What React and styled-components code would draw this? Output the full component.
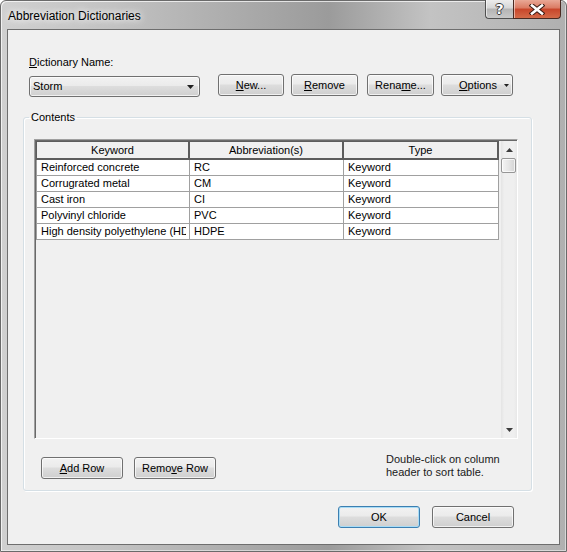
import React from "react";
import styled, { createGlobalStyle } from "styled-components";

const GlobalStyle = createGlobalStyle`
  html, body {
    margin: 0;
    padding: 0;
    background: #ffffff;
  }
  body {
    font-family: "Liberation Sans", Arial, sans-serif;
    font-size: 11px;
    color: #000;
  }
`;

const rows = [
  ["Reinforced concrete", "RC", "Keyword"],
  ["Corrugrated metal", "CM", "Keyword"],
  ["Cast iron", "CI", "Keyword"],
  ["Polyvinyl chloride", "PVC", "Keyword"],
  ["High density polyethylene (HDPE)", "HDPE", "Keyword"],
];

const colWidths = [153, 154, 155];

function Triangle({ w = 7, h = 4, up = false, color = "#202020" }) {
  const pts = up ? `0,${h} ${w},${h} ${w / 2},0` : `0,0 ${w},0 ${w / 2},${h}`;
  return (
    <svg width={w} height={h} viewBox={`0 0 ${w} ${h}`} style={{ display: "block" }}>
      <polygon points={pts} fill={color} />
    </svg>
  );
}

function App() {
  return (
    <>
      <GlobalStyle />
      <Window>
        <TitleBar>
          <Title>Abbreviation Dictionaries</Title>
          <CaptionGroup>
            <HelpButton>?</HelpButton>
            <CloseButton>
              <svg width="16" height="11" viewBox="0 0 16 11">
                <path d="M3 1.5 L13 9.5 M13 1.5 L3 9.5" stroke="#3a1a12" strokeWidth="4.6" strokeLinecap="square" />
                <path d="M3 1.5 L13 9.5 M13 1.5 L3 9.5" stroke="#ffffff" strokeWidth="2.6" strokeLinecap="square" />
              </svg>
            </CloseButton>
          </CaptionGroup>
        </TitleBar>

        <Client>
          <TopSection>
            <FieldLabel>
              <u>D</u>ictionary Name:
            </FieldLabel>
            <ControlRow>
              <Combo>
                <span>Storm</span>
                <Triangle />
              </Combo>
              <Button $w={66} $ml={18}>
                <u>N</u>ew...
              </Button>
              <Button $w={67} $ml={7}>
                <u>R</u>emove
              </Button>
              <Button $w={67} $ml={9}>
                Rena<u>m</u>e...
              </Button>
              <SplitButton $w={72} $ml={7}>
                <span>
                  <u>O</u>ptions
                </span>
                <Triangle w={5} h={3} />
              </SplitButton>
            </ControlRow>
          </TopSection>

          <GroupBox>
            <Legend>Contents</Legend>
            <TableFrame>
              <GridArea>
                <HeaderRow>
                  <HeaderCell $w={colWidths[0]}>Keyword</HeaderCell>
                  <HeaderCell $w={colWidths[1]}>Abbreviation(s)</HeaderCell>
                  <HeaderCell $w={colWidths[2]}>Type</HeaderCell>
                </HeaderRow>
                {rows.map((r, i) => (
                  <Row key={i}>
                    {r.map((c, j) => (
                      <Cell key={j} $w={colWidths[j]}>
                        <CellText>{c}</CellText>
                      </Cell>
                    ))}
                  </Row>
                ))}
              </GridArea>
              <ScrollBar>
                <ScrollArrow>
                  <Triangle up w={7} h={4} color="#3c3c3c" />
                </ScrollArrow>
                <Thumb />
                <ScrollTrack />
                <ScrollArrow>
                  <Triangle w={7} h={4} color="#3c3c3c" />
                </ScrollArrow>
              </ScrollBar>
            </TableFrame>
            <GroupFooter>
              <Button $w={82} $mt={4}>
                <u>A</u>dd Row
              </Button>
              <Button $w={82} $ml={11} $mt={4}>
                Remo<u>v</u>e Row
              </Button>
              <Hint>
                Double-click on column
                <br />
                header to sort table.
              </Hint>
            </GroupFooter>
          </GroupBox>

          <ActionRow>
            <Button $w={82} $default>
              OK
            </Button>
            <Button $w={82}>Cancel</Button>
          </ActionRow>
        </Client>
      </Window>
    </>
  );
}

const Window = styled.div`
  width: 567px;
  height: 552px;
  box-sizing: border-box;
  border: 1px solid #6a6a6a;
  border-radius: 6px 6px 0 0;
  padding: 0 6px 6px;
  display: flex;
  flex-direction: column;
  background: linear-gradient(
    90deg,
    #d0d0d0 0%,
    #c2c2c2 20%,
    #a8a8a8 45%,
    #9b9b9b 58%,
    #c3c3c3 76%,
    #b0b0b0 100%
  );
  box-shadow: inset 1px 1px 0 rgba(255, 255, 255, 0.7),
    inset -1px -1px 0 rgba(255, 255, 255, 0.5);
`;

const TitleBar = styled.div`
  height: 28px;
  display: flex;
  align-items: center;
  padding-left: 1px;
`;

const Title = styled.div`
  flex: 1;
  padding-top: 1px;
  font-size: 12px;
  color: #000;
  text-shadow: 0 0 6px #fff, 0 0 10px rgba(255, 255, 255, 0.9);
`;

const CaptionGroup = styled.div`
  align-self: flex-start;
  display: flex;
  margin-top: -1px;
  margin-right: -1px;
`;

const HelpButton = styled.div`
  width: 28px;
  height: 19px;
  box-sizing: border-box;
  border: 1px solid #505050;
  border-top: none;
  border-right: none;
  border-radius: 0 0 0 4px;
  background: linear-gradient(#ececec 0%, #d6d6d6 45%, #b4b4b4 50%, #c8c8c8 100%);
  box-shadow: inset 1px 0 0 rgba(255, 255, 255, 0.6);
  display: flex;
  align-items: center;
  justify-content: center;
  font: bold 14px "DejaVu Sans", sans-serif;
  color: #fff;
  text-shadow: 1px 0 0 #3a3a3a, -1px 0 0 #3a3a3a, 0 1px 0 #3a3a3a, 0 -1px 0 #3a3a3a;
`;

const CloseButton = styled.div`
  width: 48px;
  height: 19px;
  box-sizing: border-box;
  border: 1px solid #4a2a22;
  border-top: none;
  border-radius: 0 0 4px 0;
  background: linear-gradient(#e9a896 0%, #da7a62 45%, #c8452a 50%, #d46a48 100%);
  box-shadow: inset 1px 0 0 rgba(255, 255, 255, 0.5);
  display: flex;
  align-items: center;
  justify-content: center;
`;

const Client = styled.div`
  flex: 1;
  background: #f0f0f0;
  border: 1px solid #6e6e6e;
  display: flex;
  flex-direction: column;
`;

const TopSection = styled.div`
  padding: 25px 0 0 21px;
`;

const FieldLabel = styled.div`
  line-height: 14px;
`;

const ControlRow = styled.div`
  display: flex;
  align-items: flex-start;
  margin-top: 5px;
`;

const buttonFace = `
  box-sizing: border-box;
  border: 1px solid #707070;
  border-radius: 3px;
  background: linear-gradient(#f2f2f2 0%, #ebebeb 45%, #dddddd 50%, #cfcfcf 100%);
  box-shadow: inset 0 0 0 1px rgba(255, 255, 255, 0.7);
`;

const Combo = styled.div`
  ${buttonFace}
  width: 171px;
  height: 21px;
  margin-top: 2px;
  padding: 0 5px 0 3px;
  display: flex;
  align-items: center;
  justify-content: space-between;
  line-height: 19px;
`;

const Button = styled.div`
  ${buttonFace}
  width: ${(p) => p.$w}px;
  height: 22px;
  margin-left: ${(p) => p.$ml || 0}px;
  margin-top: ${(p) => p.$mt || 0}px;
  display: flex;
  align-items: center;
  justify-content: center;
  line-height: 20px;
  ${(p) =>
    p.$default &&
    `
    border-color: #3c7fb1;
    box-shadow: inset 0 0 0 1px #a8dcf6;
  `}
`;

const SplitButton = styled(Button)`
  justify-content: flex-start;
  padding: 0 3px 0 17px;
  span {
    flex: 1;
  }
`;

const GroupBox = styled.fieldset`
  margin: 14px 0 0 15px;
  padding: 0 0 0 10px;
  width: 509px;
  height: 380px;
  box-sizing: border-box;
  border: 1px solid #d5dfe5;
  border-radius: 3px;
  box-shadow: inset 1px 1px 0 #ffffff, 1px 1px 0 #ffffff;
  min-width: 0;
`;

const Legend = styled.legend`
  margin-left: -5px;
  padding: 0 2px;
  line-height: 13px;
  font-size: 11px;
`;

const TableFrame = styled.div`
  margin-top: 15px;
  width: 484px;
  height: 300px;
  box-sizing: border-box;
  border: 1px solid;
  border-color: #a0a0a0 #ffffff #ffffff #a0a0a0;
  padding: 1px 0 0 1px;
  box-shadow: inset 1px 1px 0 #696969;
  background: #f0f0f0;
  display: flex;
`;

const GridArea = styled.div`
  width: 465px;
  display: flex;
  flex-direction: column;
`;

const HeaderRow = styled.div`
  display: flex;
  border-left: 1px solid #5c5c5c;
`;

const HeaderCell = styled.div`
  width: ${(p) => p.$w}px;
  height: 19px;
  box-sizing: border-box;
  border-top: 1px solid #5c5c5c;
  border-right: 2px solid #5c5c5c;
  border-bottom: 2px solid #5c5c5c;
  background: #f0f0f0;
  text-align: center;
  line-height: 16px;
`;

const Row = styled.div`
  display: flex;
  border-left: 1px solid #a0a0a0;
`;

const Cell = styled.div`
  width: ${(p) => p.$w}px;
  height: 16px;
  box-sizing: border-box;
  border-right: 1px solid #a0a0a0;
  border-bottom: 1px solid #a0a0a0;
  background: #ffffff;
  padding: 0 3px 0 4px;
  line-height: 15px;
`;

const CellText = styled.div`
  white-space: nowrap;
  overflow: hidden;
`;

const ScrollBar = styled.div`
  width: 16px;
  display: flex;
  flex-direction: column;
  background: linear-gradient(90deg, #e4e4e4 0%, #efefef 20%, #efefef 80%, #e8e8e8 100%);
`;

const ScrollArrow = styled.div`
  height: 17px;
  display: flex;
  align-items: center;
  justify-content: center;
`;

const Thumb = styled.div`
  width: 15px;
  height: 15px;
  box-sizing: border-box;
  border: 1px solid #969696;
  border-radius: 2px;
  background: linear-gradient(90deg, #f4f4f4 0%, #e6e6e6 50%, #d4d4d4 100%);
  box-shadow: inset 0 0 0 1px rgba(255, 255, 255, 0.7);
`;

const ScrollTrack = styled.div`
  flex: 1;
`;

const GroupFooter = styled.div`
  display: flex;
  align-items: flex-start;
  margin-top: 14px;
  padding-left: 7px;
`;

const Hint = styled.div`
  margin-left: 170px;
  line-height: 13px;
  color: #1a1a1a;
`;

const ActionRow = styled.div`
  display: flex;
  justify-content: flex-end;
  gap: 12px;
  margin-top: 15px;
  padding-right: 45px;
`;

export default App;
